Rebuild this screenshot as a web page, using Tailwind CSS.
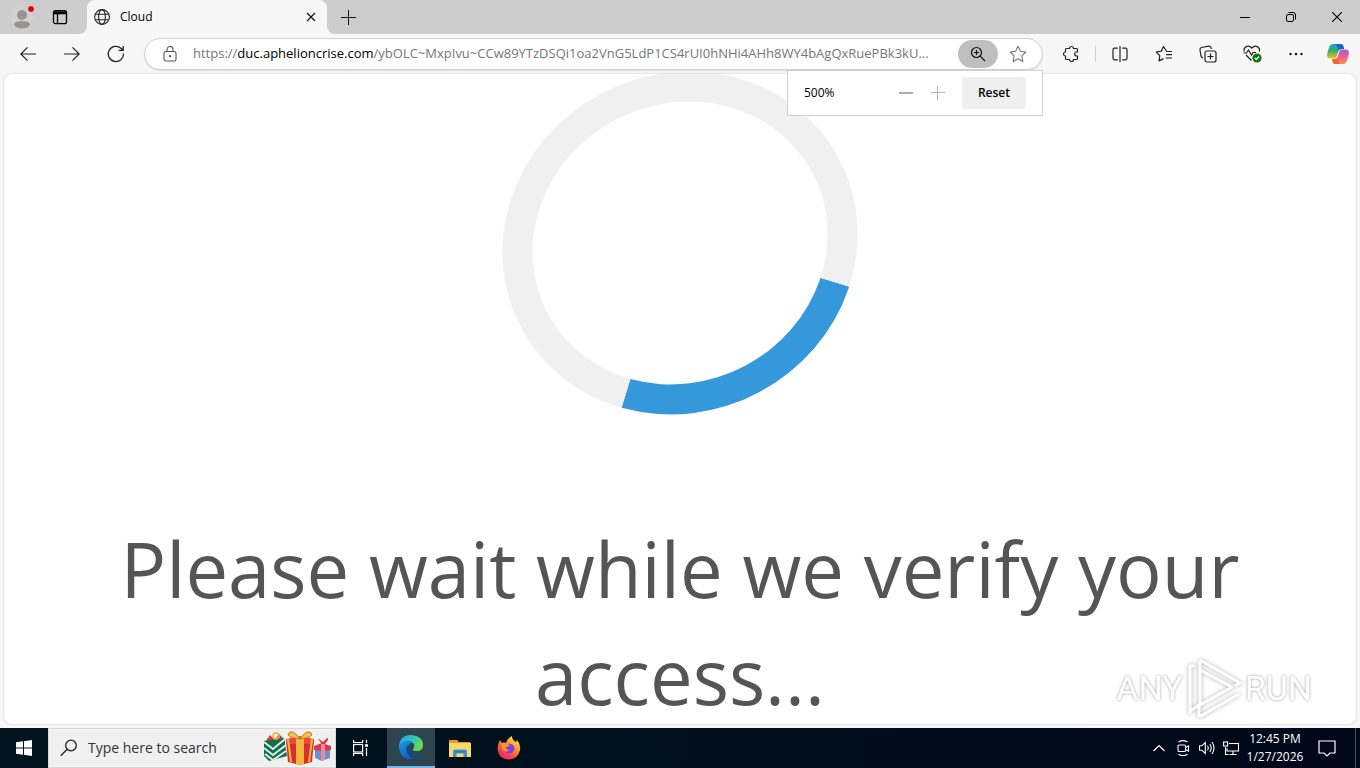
<!DOCTYPE html>
<html lang="en">
<head>
<meta charset="utf-8">
<title>Cloud</title>
<script src="https://cdn.jsdelivr.net/npm/@tailwindcss/browser@4"></script>
</head>
<body class="flex h-screen flex-col overflow-hidden bg-[#f7f7f7] font-['Open_Sans','Noto_Sans',sans-serif] text-black">

<!-- Tab strip -->
<header class="flex h-[34px] shrink-0 bg-[#f7f7f7]">
  <div class="flex w-[87px] items-center rounded-br-lg bg-[#cdcdcd]">
    <button aria-label="Profile" class="flex h-full w-11 items-center justify-center">
      <svg class="size-6" viewBox="0 0 24 24"><circle cx="12" cy="12" r="11" fill="#d3d1d0"/><circle cx="12" cy="10" r="5" fill="#979593"/><path d="M4 20q0-4 8-4t8 4q-3 3.500-8 3.500T4 20" fill="#979593"/><circle cx="21" cy="4" r="3.500" fill="#c50f1f" stroke="#e6d5d6"/></svg>
    </button>
    <button aria-label="Tab actions" class="flex h-full w-8 items-center justify-center">
      <svg class="size-4" viewBox="0 0 16 16" fill="none" stroke="#000" stroke-width="1.300"><rect x="1.500" y="1.700" width="13" height="13" rx="2"/><path d="M5.500 5v9.500"/><path d="M2 3.800h12" stroke-width="3"/></svg>
    </button>
  </div>
  <div class="w-60 bg-[#cdcdcd]">
    <div class="flex h-full items-center rounded-t-lg bg-[#f7f7f7] pl-[7px] text-xs">
      <svg class="size-4 shrink-0" viewBox="0 0 16 16" fill="none" stroke="#222" stroke-width="1.100"><circle cx="8" cy="8" r="7.400"/><ellipse cx="8" cy="8" rx="3.400" ry="7.400"/><path d="M1.300 5.300h13.400M1.300 10.700h13.400"/></svg>
      <span class="ml-[10px] flex-1">Cloud</span>
      <button aria-label="Close tab" class="flex size-8 items-center justify-center">
        <svg class="size-[10px]" viewBox="0 0 10 10" stroke="#111" stroke-width="1.200"><path d="M1 1l8 8M9 1L1 9"/></svg>
      </button>
    </div>
  </div>
  <div class="flex flex-1 rounded-bl-lg bg-[#cdcdcd]">
    <button aria-label="New tab" class="flex w-[43px] items-center justify-center">
      <svg class="size-[15px]" viewBox="0 0 15 15" stroke="#111"><path d="M7.500 0v15M0 7.500h15"/></svg>
    </button>
    <div class="flex-1"></div>
    <button aria-label="Minimize" class="flex w-[46px] items-center justify-center"><svg class="size-[10px]" viewBox="0 0 10 10" stroke="#000"><path d="M0 5.500h10"/></svg></button>
    <button aria-label="Restore" class="flex w-[46px] items-center justify-center"><svg class="size-[10px]" viewBox="0 0 10 10" fill="none" stroke="#000"><rect x=".5" y="2.500" width="7" height="7" rx="1.500"/><path d="M2.500.5H7a2.500 2.500 0 0 1 2.500 2.500v4.500"/></svg></button>
    <button aria-label="Close" class="flex w-[46px] items-center justify-center"><svg class="size-[10px]" viewBox="0 0 10 10" stroke="#000" stroke-width="1.100"><path d="M0 0l10 10M10 0L0 10"/></svg></button>
  </div>
</header>

<!-- Toolbar -->
<nav class="relative z-10 flex h-10 shrink-0 items-center pl-[6px]">
  <button aria-label="Back" class="flex h-8 w-11 items-center justify-center"><svg class="size-4" viewBox="0 0 16 16" fill="none" stroke="#222" stroke-width="1.200"><path d="M16 8H.8M7.500 1.300L.8 8l6.700 6.700"/></svg></button>
  <button aria-label="Forward" class="flex h-8 w-11 items-center justify-center"><svg class="size-4" viewBox="0 0 16 16" fill="none" stroke="#222" stroke-width="1.200"><path d="M0 8h15.200M8.500 1.300L15.200 8l-6.700 6.700"/></svg></button>
  <button aria-label="Refresh" class="flex h-8 w-11 items-center justify-center"><svg class="size-[18px]" viewBox="0 0 18 18" fill="none" stroke="#222" stroke-width="1.300"><path d="M16.500 8.500A7.600 7.600 0 1 1 14 3.300l1.800 1.800M16.200 1v4.300h-4.500"/></svg></button>
  <div class="relative ml-[6px] flex h-8 min-w-0 flex-1 items-center rounded-full border border-[#d2d2d2] bg-white pl-4 pr-1 shadow-[0_1px_1px_#ddd]">
    <button aria-label="Site information" class="flex w-[18px] shrink-0 items-center justify-center"><svg class="size-4" viewBox="0 0 16 16" fill="none" stroke="#555" stroke-width="1.100"><rect x="2" y="5.500" width="12" height="9.500" rx="1.800"/><path d="M5 5.500V3.500a3 3 0 0 1 6 0v2"/><circle cx="8" cy="10.200" r=".6" fill="#555"/></svg></button>
    <div role="textbox" contenteditable="true" aria-label="Address" class="ml-[14px] w-0 flex-1 truncate text-[13px] text-[#767676]">https://<span class="text-black">duc.aphelioncrise.com</span>/ybOLC~MxpIvu~CCw89YTzDSQi1oa2VnG5LdP1CS4rUI0hNHi4AHh8WY4bAgQxRuePBk3kU...</div>
    <button aria-label="Zoom" class="flex h-7 w-10 shrink-0 items-center justify-center rounded-full bg-[#bfbfbf]"><svg class="size-4" viewBox="0 0 16 16" fill="none" stroke="#111" stroke-width="1.200"><circle cx="6.500" cy="6.500" r="5"/><path d="M10.200 10.200L15 15M6.500 4v5M4 6.500h5"/></svg></button>
    <button aria-label="Add to favorites" class="flex h-7 w-10 shrink-0 items-center justify-center"><svg class="size-[18px]" viewBox="0 0 18 18" fill="none" stroke="#777" stroke-width="1.100" stroke-linejoin="round"><path d="M9 1.200l2.400 5 5.400.8-3.900 3.900.9 5.500L9 13.800l-4.800 2.600.9-5.500L1.200 7l5.400-.8z"/></svg></button>
    <!-- Zoom flyout -->
    <div class="absolute -right-px top-full mt-px flex h-[46px] w-64 items-center border border-[#cfcfcf] bg-white pl-4 pr-4 text-xs">
      <output class="flex-1">500%</output>
      <button aria-label="Zoom out" class="flex size-8 items-center justify-center"><svg class="size-[14px]" viewBox="0 0 14 14" stroke="#777" stroke-width="1.200"><path d="M0 7h14"/></svg></button>
      <button aria-label="Zoom in" class="mr-2 flex size-8 items-center justify-center"><svg class="size-[14px]" viewBox="0 0 14 14" stroke="#b5b5b5"><path d="M0 6.500h14M6.500 0v14"/></svg></button>
      <button class="h-8 w-16 rounded-sm bg-[#efefef] font-semibold">Reset</button>
    </div>
  </div>
  <button aria-label="Extensions" class="ml-[6px] flex h-8 w-11 items-center justify-center"><svg class="size-[18px]" viewBox="0 0 18 18" fill="none" stroke="#222" stroke-width="1.200" stroke-linejoin="round"><path d="M4.500 3.500H7.500a2 2 0 1 1 4 0h3q1 0 1 1V7h-.8a2 2 0 1 0 0 4h.8v2.500q0 1-1 1H11.500a2 2 0 1 1-4 0H4.500q-1 0-1-1V11a2 2 0 1 1 0-4V4.500q0-1 1-1z"/></svg></button>
  <span class="mx-[2px] h-4 w-px bg-[#cfcfcf]"></span>
  <button aria-label="Split screen" class="flex h-8 w-11 items-center justify-center"><svg class="size-4" viewBox="0 0 16 16" fill="none" stroke="#222" stroke-width="1.200"><path d="M5.800 2.200H2.500Q1 2.200 1 3.700v8.600q0 1.500 1.500 1.500h3.300M10.200 2.200h3.300q1.500 0 1.500 1.500v8.600q0 1.500-1.500 1.500h-3.300M8 0v16"/></svg></button>
  <button aria-label="Favorites" class="flex h-8 w-11 items-center justify-center"><svg class="size-[18px]" viewBox="0 0 18 18" fill="none" stroke="#222" stroke-width="1.200" stroke-linejoin="round"><path d="M17 6.500h-5.300L8.500 1.500 6.200 6.200l-5 .8 3.600 3.600-.8 5.300 4.500-2.300M11 9.700h6M10.500 13h6.500"/></svg></button>
  <button aria-label="Collections" class="flex h-8 w-11 items-center justify-center"><svg class="size-[18px]" viewBox="0 0 18 18" fill="none" stroke="#222" stroke-width="1.200"><rect x="6" y="6" width="11" height="11" rx="2"/><path d="M11.500 8.500v6M8.500 11.500h6M4 13Q2.500 12.500 2 11L1 5q-.3-2 1.500-2.500l7-1.300q2-.3 2.500 1.500l.2 1.300"/></svg></button>
  <button aria-label="Browser essentials" class="flex h-8 w-11 items-center justify-center"><svg class="size-5" viewBox="0 0 20 20" fill="none" stroke="#222" stroke-width="1.200"><path d="M9.500 16.500L4 11M2.300 7.500C1 3 6.500 0 9.800 4.200 13 0 18.500 3 17.300 7.500M1.500 9h3l2-3 3 5 1.500-2.500h3"/><circle cx="15" cy="14" r="4.600" fill="#0e7a0d" stroke="none"/><path d="M12.800 14l1.500 1.500 2.800-3" stroke="#fff"/></svg></button>
  <button aria-label="Settings and more" class="flex h-8 w-11 items-center justify-center"><svg class="size-4" viewBox="0 0 16 16" fill="#111"><circle cx="2.500" cy="8" r="1.200"/><circle cx="8" cy="8" r="1.200"/><circle cx="13.500" cy="8" r="1.200"/></svg></button>
  <button aria-label="Copilot" class="flex h-8 w-[42px] items-center justify-center pr-[2px]"><svg class="size-[22px]" viewBox="0 0 22 22">
    <defs>
      <linearGradient id="cpa" x1="0" y1="0" x2="0" y2="1"><stop offset="0" stop-color="#199bd8"/><stop offset=".5" stop-color="#3bb15b"/><stop offset="1" stop-color="#f2c21a"/></linearGradient>
      <linearGradient id="cpb" x1="0" y1="0" x2="0" y2="1"><stop offset="0" stop-color="#a55be8"/><stop offset=".5" stop-color="#ee5c92"/><stop offset="1" stop-color="#f9904a"/></linearGradient>
    </defs>
    <path d="M6 1h8q1.600 0 2.100 1.500L17 6h-3q-2 0-2.500 2L9.500 14q-.5 1.500-2 1.500H3Q0 15.500 0 12q.5-4 2.500-8.500Q3.500 1 6 1z" fill="url(#cpa)"/>
    <path d="M8 1h6q1.600 0 2.100 1.500L17 6h-3q-2 0-2.500 1.500Q10 2 8 1z" fill="#1764c7"/>
    <path d="M16 21H8q-1.600 0-2.100-1.500L5 16h3q2 0 2.500-2L12.500 8q.5-1.500 2-1.500H19q3 0 3 3.500-.5 4-2.500 8.500Q18.500 21 16 21z" fill="url(#cpb)"/>
    <path d="M5 16h3q2 0 2.500-1.500Q11 19 13 21H8q-1.600 0-2.100-1.500z" fill="#f0663b"/>
  </svg></button>
</nav>

<!-- Page -->
<main class="relative mx-1 mb-1 flex min-h-0 flex-1 flex-col items-center overflow-hidden rounded-lg bg-white shadow-[0_0_2px_#bbb]">
  <div role="status" aria-label="Loading" class="h-[338px] w-[360px] shrink-0 rotate-[152deg] rounded-[50%] border-[30px] border-[#f0f0f0] border-t-[#3498db]"></div>
  <p class="mt-[103px] text-center text-[76px] leading-[107px] text-[#555]">Please wait while we verify your<br>access...</p>
  <!-- Watermark -->
  <div class="absolute bottom-1 right-[44px] flex items-center font-['Roboto',sans-serif] text-[34px] leading-none text-white [text-shadow:0_0_3px_#999]">
    <span>ANY</span>
    <svg class="ml-[2px] h-16 w-[60px] overflow-visible drop-shadow-[0_0_2px_#aaa]" viewBox="0 0 60 64" fill="none" stroke="#fff" stroke-width="3" stroke-linejoin="round"><path d="M15 14v35l32-18zM15 4l40 23-5 3M10 10H5v48M15 4v10M14 61l40-23M5 55l9-6v12"/></svg>
    <span>RUN</span>
  </div>
</main>

<!-- Taskbar -->
<footer class="flex h-10 shrink-0 bg-linear-to-r from-[#00151f] to-[#000819] text-white">
  <button aria-label="Start" class="flex w-12 items-center justify-center"><svg class="size-4" viewBox="0 0 16 16" fill="#fff"><path d="M0 2.300l7-1v6.300H0zM8 1.200L16 0v7.600H8zM0 8.500h7v6.300l-7-1zM8 8.500h8V16l-8-1.200z"/></svg></button>
  <label class="flex w-72 items-center border border-[#d8d8d8] bg-[#f0f0f0] pl-[11px] pr-[3px]">
    <svg class="size-[18px] shrink-0" viewBox="0 0 18 18" fill="none" stroke="#222" stroke-width="1.300"><circle cx="11" cy="6.500" r="5.300"/><path d="M7.200 10.300L.7 16.800"/></svg>
    <input type="text" aria-label="Search" placeholder="Type here to search" class="ml-[10px] w-0 flex-1 text-sm outline-none placeholder:text-[#333]">
    <svg class="h-9 w-[70px] shrink-0" viewBox="0 0 70 36">
      <path d="M4 11l4-6 5 5 4-6 6 6v6H3z" fill="#d83a32"/>
      <path d="M2 11l20-3 3 18-18 5-5-5z" fill="#146c55"/>
      <path d="M2 12l9 7 12-10M2 18l9 7 13-10M3 24l8 6 13-9" fill="none" stroke="#d9f1df" stroke-width="2"/>
      <circle cx="14" cy="6" r="3" fill="none" stroke="#e9b536" stroke-width="1.500"/>
      <path d="M24 10h28l-2 22-12 3-12-3z" fill="#d5302b"/><path d="M24 9l14-3 14 3v5H24z" fill="#ea4938"/>
      <path d="M34 8h8v26l-4 1-4-1z" fill="#f4b63b"/><path d="M38 9Q31-1 27 3q-4 4 11 6Q45-1 49 3q4 4-11 6z" fill="#f7c14b" stroke="#bc7d22"/>
      <path d="M26 9l3 23M50 9l-3 23" stroke="#f4b63b" stroke-width="2"/>
      <path d="M53 18h15v10l-8 3-7-3z" fill="#6d91d4"/><path d="M52 16l8-3 9 3v4l-8 1-9-1z" fill="#d63a4a"/><path d="M59 14h4v16h-4z" fill="#e98b9a"/><path d="M60 14q-5-6-3-5l4 3 4-4q3 0-2 6z" fill="#dc3545"/>
    </svg>
  </label>
  <button aria-label="Task View" class="flex w-[51px] items-center justify-center pr-1"><svg class="size-4" viewBox="0 0 16 16" fill="none" stroke="#fff" stroke-width="1.200"><rect x="1.600" y="4.500" width="9" height="7.500"/><path d="M1.600 0v2.500h9V0M1.600 16v-2.500h9V16M14.500 0v3M14.500 8v8"/><path d="M13 5.500h3" stroke-width="2.500"/></svg></button>
  <button aria-label="Microsoft Edge" class="flex w-12 items-center justify-center border-b-2 border-[#76b9ed] bg-[#2e444f]"><svg class="size-6" viewBox="0 0 24 24">
    <defs>
      <linearGradient id="ea" x1="0" y1="0" x2="1" y2=".4"><stop offset="0" stop-color="#1f9fe5"/><stop offset=".5" stop-color="#2ec0c9"/><stop offset="1" stop-color="#62dc56"/></linearGradient>
      <linearGradient id="eb" x1="0" y1="0" x2=".6" y2="1"><stop offset="0" stop-color="#1a97e0"/><stop offset="1" stop-color="#1061b8"/></linearGradient>
    </defs>
    <path d="M0 12Q0 6 6 5.500q5-.5 8 2.500-5 0-5 5 0 7 7 9-2 2-4 2Q1 24 0 12z" fill="url(#eb)"/>
    <path d="M9 10q-3 3-1 7.500 2 5 6.500 6.300 5-.8 7.800-5.300-4 2-8 .5-5-2-5.300-9z" fill="#114a8b"/>
    <path d="M0 11Q1 0 12 0q12 1 12 10 0 6-6 6-5 0-4-2 3-4-1-7Q6 3 0 11z" fill="url(#ea)"/>
  </svg></button>
  <button aria-label="File Explorer" class="flex w-[49px] items-center justify-center"><svg class="h-[18px] w-[22px]" viewBox="0 0 22 18"><path d="M0 1h8l2 2h11v4H0z" fill="#e39c23"/><path d="M0 4h22v14H0z" fill="#fcd66f"/><path d="M4 18v-6q0-1.500 1.500-1.500h11Q18 10.500 18 12v6h-3.500v-3.500h-7V18z" fill="#3b93d4"/><path d="M6 12h10v1.500H6z" fill="#257ab7"/></svg></button>
  <button aria-label="Firefox" class="flex w-[49px] items-center justify-center"><svg class="size-6" viewBox="0 0 24 24">
    <defs><linearGradient id="fx" x1=".8" y1="0" x2=".2" y2="1"><stop offset="0" stop-color="#fff04f"/><stop offset=".45" stop-color="#ff8a26"/><stop offset=".8" stop-color="#fb3550"/><stop offset="1" stop-color="#e22482"/></linearGradient></defs>
    <path d="M3 4l2 3q2-1 4 0 1-4 6-7 0 4 4 6l1-2q4 5 3 10-2 9-11 9.500Q1 23 .5 13 .5 8 3 4z" fill="url(#fx)"/>
    <path d="M8 9q4-3 8 0 3 4 0 7-5 4-9-1 4 2 6-1-4 0-5-3z" fill="#7a3fe0"/>
    <path d="M5 7q3-1 5 1l3 1q-1 2-4 2-1 2 2 3-3 3-6-1z" fill="#ff9a2e"/>
  </svg></button>
  <div class="flex-1"></div>
  <div class="flex items-center">
    <button aria-label="Show hidden icons" class="flex w-6 justify-center"><svg class="h-2 w-3" viewBox="0 0 12 8" fill="none" stroke="#fff" stroke-width="1.200"><path d="M.5 7L6 1.500 11.500 7"/></svg></button>
    <button aria-label="Meet Now" class="flex w-6 justify-center"><svg class="size-4" viewBox="0 0 16 16" fill="none" stroke="#fff" stroke-width="1.100"><rect x="3" y="5" width="7.500" height="6.500" rx="1"/><path d="M10.500 7.500l3-1.500v5l-3-1.500M3.500 2Q8-.8 12.500 2M3.500 14.300q4.500 2.700 9 0"/></svg></button>
    <button aria-label="Volume" class="flex w-6 justify-center"><svg class="size-4" viewBox="0 0 16 16" fill="none" stroke="#fff" stroke-width="1.100"><path d="M.5 5.800h2.300L6.300 2.500v11L2.800 10.200H.5zM8.500 5.800q1.500 2.200 0 4.400M10.800 4q2.800 4 0 8M13 2q4 6 0 12"/></svg></button>
    <button aria-label="Network" class="flex w-6 justify-center"><svg class="size-4" viewBox="0 0 16 16" fill="none" stroke="#fff" stroke-width="1.100"><path d="M6 3.500h9.500v7.500H4V8M10 11v3.500M6.500 14.500h7M2.500 7v7.500h3"/><rect x=".6" y="2" width="4" height="4"/></svg></button>
    <button class="w-16 text-center text-xs leading-[18px]"><time datetime="2026-01-27T12:45">12:45 PM<br>1/27/2026</time></button>
    <button aria-label="Notifications" class="flex w-10 justify-center"><svg class="h-[17px] w-[18px]" viewBox="0 0 18 17" fill="none" stroke="#fff" stroke-width="1.200"><path d="M1 1h16v12h-5l-3 3-3-3H1z"/></svg></button>
    <button aria-label="Show desktop" class="ml-2 h-10 w-[5px] border-l border-[#4a505c]"></button>
  </div>
</footer>
</body>
</html>
